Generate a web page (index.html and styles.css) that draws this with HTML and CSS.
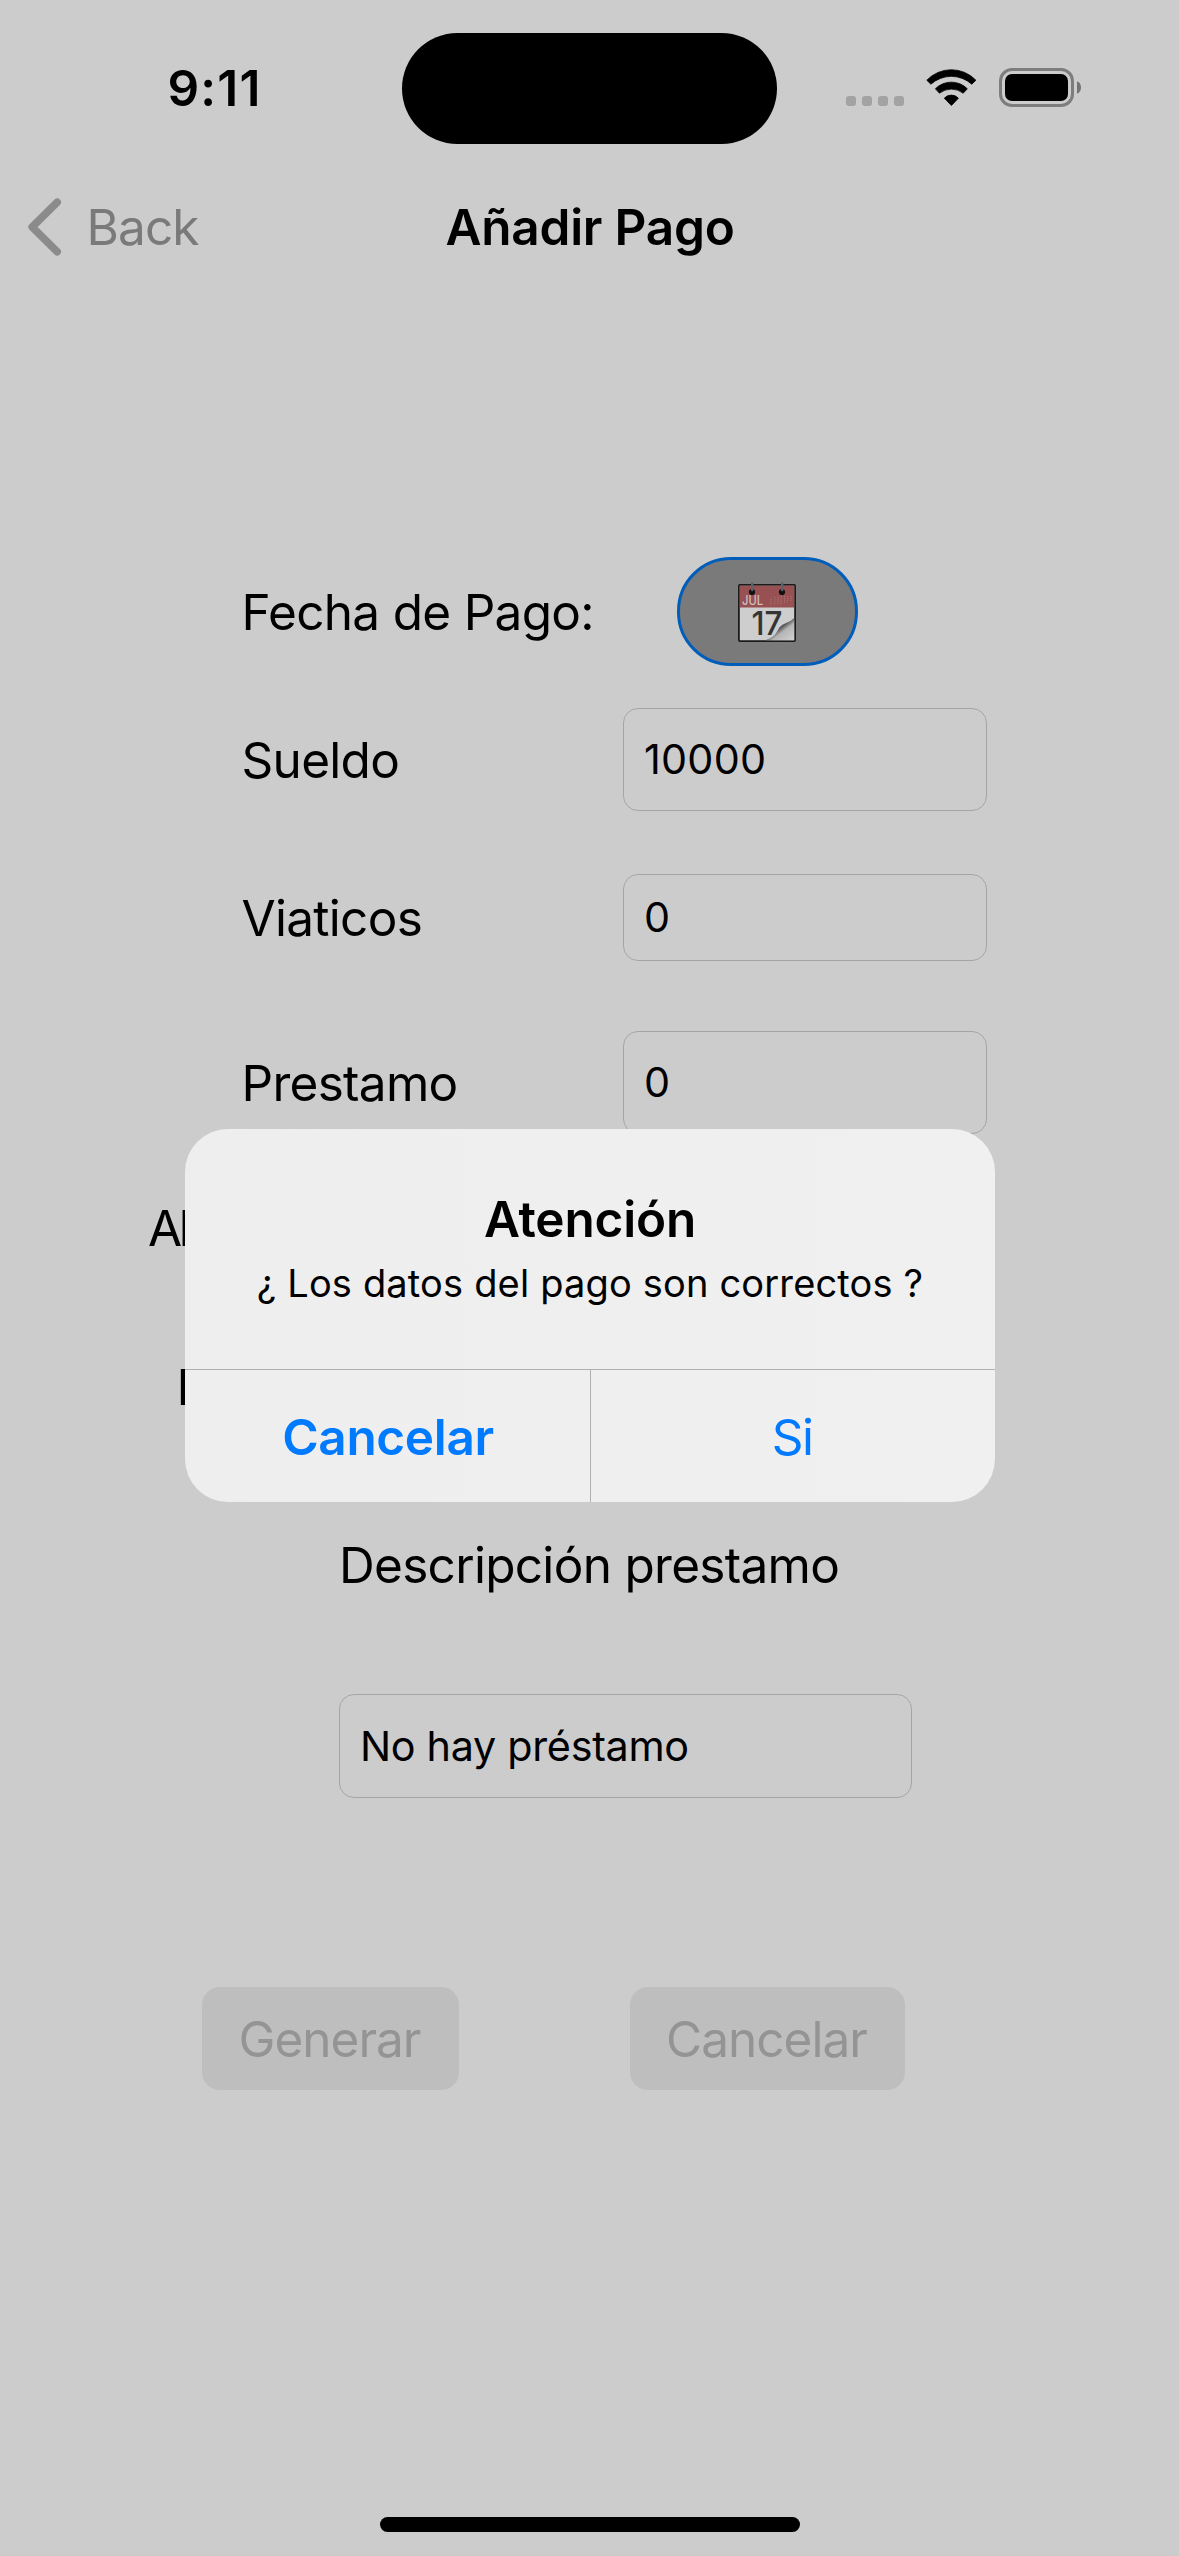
FILE: index.html
```html
<!DOCTYPE html>
<html lang="es">
<head>
<meta charset="utf-8">
<title>Añadir Pago</title>
<link rel="stylesheet" href="styles.css">
</head>
<body>
<div class="screen">
  <header class="status">
    <div class="time">9:11</div>
    <div class="island"></div>
    <div class="indicators">
      <div class="dots"><i></i><i></i><i></i><i></i></div>
      <svg class="wifi" width="51" height="38" viewBox="0 0 51 38" stroke="#000" stroke-width=".8" stroke-linejoin="round">
        <path d="M.8 11.2A34 34 0 0 1 49.9 11.2L45.8 15.2A30.6 30.6 0 0 0 4.9 15.2Z"/>
        <path d="M9.4 19.8A22.4 22.4 0 0 1 41.3 19.8L37.2 24.2A19.2 19.2 0 0 0 13.5 24.2Z"/>
        <path d="M18.3 29.2A9.6 9.6 0 0 1 32.4 29.2L25.4 36.5Z"/>
      </svg>
      <svg class="battery" width="82" height="39" viewBox="0 0 82 39">
        <rect x="1.5" y="1.5" width="72" height="36" rx="11.5" fill="none" stroke="#7d7d7d" stroke-width="3"/>
        <rect x="6" y="6" width="63" height="27" rx="7"/>
        <path d="M78 13.3Q82 15 82 19.5T78 25.7Z" fill="#737373"/>
      </svg>
    </div>
  </header>

  <nav class="nav">
    <div class="back">
      <svg width="34" height="58" viewBox="0 0 34 58" fill="none" stroke="#8b8b8b" stroke-width="7.6" stroke-linecap="round" stroke-linejoin="round"><path d="M29.2 4.2L4.2 29L29.2 53.8"/></svg>
      <span>Back</span>
    </div>
    <h1 class="title">Añadir Pago</h1>
  </nav>

  <main class="form">
    <div class="row row-date">
      <span class="label">Fecha de Pago:</span>
      <div class="date-button">
        <svg class="calendar" width="60" height="62" viewBox="0 0 60 62">
          <defs>
            <linearGradient id="curl" x1="0" y1="0" x2="1" y2="1">
              <stop offset=".3" stop-color="#cfcfcf"/><stop offset=".48" stop-color="#555"/><stop offset=".62" stop-color="#b5b5b5"/><stop offset="1" stop-color="#d2d2d2"/>
            </linearGradient>
          </defs>
          <rect x="1.9" y="3.9" width="56.2" height="56.2" rx="1" fill="#cecece" stroke="#1c1a1a" stroke-width="1.8"/>
          <path d="M2.8 4.8H57.2V26.5H2.8Z" fill="#985152"/>
          <g stroke="#aa7273" stroke-width="1" stroke-dasharray="1.3 .8"><path d="M34 18V24M37.7 16V24M41 15.5V24M44 15V24M47.5 15V22M50.5 15V21M54 15V20"/></g>
          <text class="cal-month" x="5" y="24" textLength="21" lengthAdjust="spacingAndGlyphs">JUL</text>
          <text class="cal-day" x="14.5" y="54" textLength="31" lengthAdjust="spacingAndGlyphs">17</text>
          <path d="M28 59.2Q37 57 41 49Q43 44 48 42.5Q54 40.5 57.2 37V59.2Z" fill="url(#curl)"/>
          <g fill="#111"><circle cx="15" cy="11" r="3.1"/><circle cx="45" cy="11" r="3.1"/></g>
          <path d="M15.2 9V2.5M45.2 9V2.5" stroke="#59636c" stroke-width="2.4" stroke-linecap="round"/>
        </svg>
      </div>
    </div>
    <div class="row row-salary"><span class="label">Sueldo</span><div class="field number">10000</div></div>
    <div class="row row-travel"><span class="label">Viaticos</span><div class="field number">0</div></div>
    <div class="row row-loan"><span class="label">Prestamo</span><div class="field number">0</div></div>
    <div class="line line-first">Al</div>
    <div class="line line-second">I</div>
    <div class="line line-desc">Descripción prestamo</div>
    <div class="field field-desc">No hay préstamo</div>
    <div class="actions">
      <div class="action generate">Generar</div>
      <div class="action cancel">Cancelar</div>
    </div>
  </main>

  <div class="home-bar"></div>

  <section class="alert">
    <div class="alert-body">
      <h2 class="alert-title">Atención</h2>
      <p class="alert-text">¿ Los datos del pago son correctos ?</p>
    </div>
    <div class="alert-buttons">
      <div class="alert-cancel">Cancelar</div>
      <div class="alert-ok">Si</div>
    </div>
  </section>
</div>
</body>
</html>
```
FILE: styles.css
```css
* { box-sizing: border-box; }

body {
  margin: 0;
  background: #ccc;
  color: #000;
  font-family: Inter, "Liberation Sans", sans-serif;
  font-size: 49.5px;
  line-height: 60px;
}

h1, h2, p { margin: 0; font-size: inherit; }

.screen {
  position: relative;
  display: flex;
  flex-direction: column;
  width: 1179px;
  height: 2556px;
  overflow: hidden;
}

/* Status bar */
.status {
  display: grid;
  grid-template-columns: 402px 375px 1fr;
  height: 176px;
  padding-top: 33px;
}
.time {
  padding: 25px 0 0 167.5px;
  font-weight: 600;
  letter-spacing: 1.2px;
}
.island { height: 111px; border-radius: 56px; background: #000; }
.indicators { display: flex; align-items: flex-start; padding: 35px 0 0 69px; }
.dots { display: flex; gap: 6px; margin-top: 28px; }
.dots i { width: 10px; height: 10px; border-radius: 3px; background: #a3a3a3; }
.wifi { margin: 1px 0 0 22px; }
.battery { margin-left: 22px; }

/* Navigation bar */
.nav {
  display: grid;
  grid-template-columns: 445.5px 1fr;
  align-items: center;
  height: 101px;
}
.back {
  display: flex;
  align-items: center;
  gap: 25px;
  padding-left: 27.5px;
  color: #7a7a7a;
  letter-spacing: -0.9px;
}
.title { font-weight: 600; letter-spacing: -0.24px; }

/* Form */
.form { padding-top: 280px; letter-spacing: -0.7px; }
.row {
  display: grid;
  grid-template-columns: 381.5px 364px;
  align-items: center;
  padding-left: 241.5px;
}
.row-date { height: 109px; }
.row-salary { height: 103px; margin-top: 42px; }
.row-travel { height: 87px; margin-top: 63px; }
.row-loan { height: 103px; margin-top: 70px; }

.date-button {
  display: flex;
  justify-content: center;
  align-items: center;
  width: 181px;
  height: 109px;
  margin-left: 54px;
  padding-right: 2px;
  border: 3px solid #005eba;
  border-radius: 54px;
  background: #7a7a7a;
}
.cal-month { fill: #d0c0c0; font-size: 12.5px; font-weight: 500; letter-spacing: 0; }
.cal-day { fill: #343434; font-size: 33px; font-weight: 500; letter-spacing: 0; }

.field {
  display: flex;
  align-items: center;
  height: 100%;
  padding-left: 20px;
  border: 1px solid #a5a5a5;
  border-radius: 15px;
  font-size: 41.3px;
  letter-spacing: -0.29px;
}
.number { padding-bottom: 1px; letter-spacing: 0.26px; }

.line-first { margin: 64px 0 0 148px; letter-spacing: -3.5px; }
.line-second { margin: 99px 0 0 176.5px; }
.line-desc { margin: 118px 0 0 339px; }
.field-desc { width: 573px; height: 104px; margin: 99px 0 0 339px; }

.actions { display: flex; gap: 171px; margin-top: 189px; padding-left: 202px; }
.action {
  height: 103px;
  padding-right: 2px;
  border-radius: 18px;
  background: #bebebe;
  color: #949494;
  line-height: 104px;
  text-align: center;
  letter-spacing: -1px;
}
.generate { width: 257px; }
.cancel { width: 275px; }

.home-bar {
  width: 420px;
  height: 15px;
  margin: auto auto 24px;
  border-radius: 8px;
  background: #000;
}

/* Alert shown over the form */
.alert {
  position: absolute;
  left: 185px;
  top: 1129px;
  width: 810px;
  height: 373px;
  border-radius: 43px;
  background: linear-gradient(90deg, #eee, #f0f0f0);
  overflow: hidden;
  text-align: center;
}
.alert-body { height: 240px; padding-top: 60px; }
.alert-title { font-weight: 600; letter-spacing: -0.18px; }
.alert-text { margin-top: 10px; font-size: 38px; line-height: 48px; letter-spacing: 0.17px; }
.alert-buttons {
  display: grid;
  grid-template-columns: 406px 1fr;
  height: 133px;
  border-top: 1px solid #b0b0b0;
  color: #007aff;
  line-height: 134px;
}
.alert-cancel { padding-left: 1px; border-right: 1px solid #b0b0b0; font-weight: 600; letter-spacing: -0.34px; }
.alert-ok { padding-right: 2px; letter-spacing: -1.5px; }
```
